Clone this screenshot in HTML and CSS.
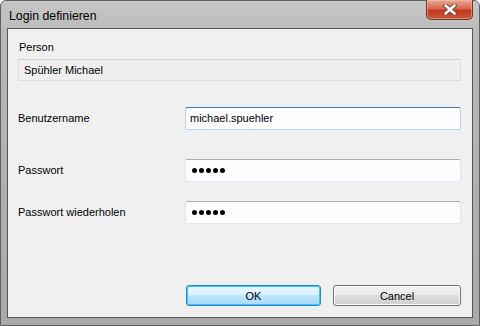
FILE: index.html
```html
<!DOCTYPE html>
<html lang="de">
  <head>
    <meta charset="UTF-8" />
    <title>Login definieren</title>
    <link rel="stylesheet" href="styles.css">
  </head>
  <body>
    <div class="window">
      <div class="titlebar">
        <span class="title">Login definieren</span>
        <div class="close">
          <svg width="14" height="11" viewBox="0 0 14 11">
            <path d="M2.5 1.5 L11.5 9.5 M11.5 1.5 L2.5 9.5" stroke="#6b3a30" stroke-width="4.4" stroke-linecap="round" />
            <path d="M2.5 1.5 L11.5 9.5 M11.5 1.5 L2.5 9.5" stroke="#ffffff" stroke-width="2.6" stroke-linecap="round" />
          </svg>
        </div>
      </div>
      <div class="client">
        <div class="person-label">Person</div>
        <div class="readonly">Spühler Michael</div>

        <div class="row row-user">
          <label class="label">Benutzername</label>
          <div class="field focused">michael.spuehler</div>
        </div>
        <div class="row row-pass">
          <label class="label">Passwort</label>
          <div class="field"><span class="dots"><i></i><i></i><i></i><i></i><i></i></span></div>
        </div>
        <div class="row row-repeat">
          <label class="label">Passwort wiederholen</label>
          <div class="field"><span class="dots"><i></i><i></i><i></i><i></i><i></i></span></div>
        </div>

        <div class="buttons">
          <button class="btn btn-default">OK</button>
          <button class="btn btn-cancel">Cancel</button>
        </div>
      </div>
    </div>
  </body>
</html>
```

FILE: styles.css
```css
body {
  margin: 0;
  width: 480px;
  height: 326px;
  overflow: hidden;
  background: #ffffff;
  font-family: "Liberation Sans", Arial, sans-serif;
  font-size: 11px;
  color: #000;
}

.window {
  box-sizing: border-box;
  height: 326px;
  display: flex;
  flex-direction: column;
  padding: 0 6px 7px 6px;
  border: 1px solid #5f5f5f;
  border-radius: 6px 6px 0 0;
  background: linear-gradient(#c6c6c6, #b8b8b8 40px, #a9a9a9);
}

.titlebar {
  height: 27px;
  display: flex;
  justify-content: space-between;
  align-items: flex-start;
}

.title {
  margin: 8px 0 0 2px;
  font-size: 12.3px;
  line-height: 14px;
  color: #000;
}

.close {
  box-sizing: border-box;
  width: 47px;
  height: 20px;
  margin-top: -1px;
  display: flex;
  justify-content: center;
  align-items: center;
  border: 1px solid #6b3b31;
  border-top: none;
  border-radius: 0 0 5px 5px;
  background: linear-gradient(#e9a896, #d8674c 45%, #c2391f 55%, #cd5638);
  box-shadow: inset 0 0 0 1px rgba(255, 200, 180, 0.45);
}

.client {
  flex: 1;
  display: flex;
  flex-direction: column;
  padding: 12px 11px 11px 10px;
  border: 1px solid #555;
  background: #f0f0f0;
}

.person-label {
  line-height: 13px;
  margin-left: 1px;
}

.readonly {
  box-sizing: border-box;
  height: 22px;
  margin-top: 5px;
  padding-left: 5px;
  line-height: 20px;
  border: 1px solid #dcdcdc;
  border-top-color: #d0d0d0;
  background: #efefef;
}

.row {
  display: flex;
  align-items: center;
}

.row-user {
  margin-top: 26px;
}

.row-pass {
  margin-top: 29px;
}

.row-repeat {
  margin-top: 19px;
}

.label {
  width: 167px;
  line-height: 13px;
}

.field {
  box-sizing: border-box;
  width: 276px;
  height: 23px;
  padding-left: 4px;
  line-height: 21px;
  display: flex;
  align-items: center;
  background: #fdfdff;
  border: 1px solid #e2e3ea;
  border-top-color: #abadb3;
  border-bottom-color: #e3e9ef;
  border-radius: 2px;
}

.field.focused {
  border-color: #b5d2ea;
  border-top-color: #3d7bad;
  border-bottom-color: #b7d5ee;
}

.dots {
  display: flex;
  gap: 2px;
  padding-left: 2px;
}

.dots i {
  width: 5px;
  height: 5px;
  border-radius: 50%;
  background: #000;
}

.buttons {
  margin-top: auto;
  display: flex;
  justify-content: flex-end;
  gap: 12px;
}

.btn {
  box-sizing: border-box;
  height: 21px;
  padding: 0;
  font-family: inherit;
  font-size: 11px;
  color: #000;
  border: 1px solid #707070;
  border-radius: 3px;
  background: linear-gradient(#f2f2f2, #ebebeb 50%, #dddddd 50%, #cfcfcf);
  box-shadow: inset 0 0 0 1px #fcfcfc;
}

.btn-default {
  width: 135px;
  border-color: #2a87c7;
  background: linear-gradient(#eaf6fd, #d9f0fc 50%, #bee6fd 50%, #a7d9f5);
  box-shadow: inset 0 0 0 1px #3bc6fb;
}

.btn-cancel {
  width: 128px;
}
```
